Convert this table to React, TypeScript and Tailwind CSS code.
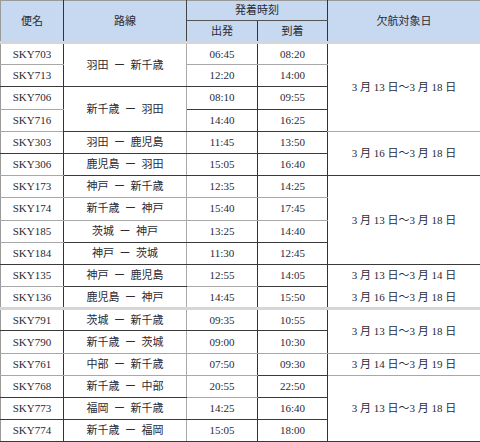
type Row = {
  flight: string;
  route?: string;
  routeSpan?: number;
  dep: string;
  arr: string;
  date?: string;
  dateSpan?: number;
  // bottom borders: flight, route, dep, arr, date
  b: [string, string, string, string, string];
};

const D = "border-b border-b-[#3a3a3a]";
const G = "border-b border-b-[#a8a8a8]";
const L = "border-b-[3px] border-b-[#d6d6d6]";
const N = "border-b border-b-white";

const rows: Row[] = [
  { flight: "SKY703", route: "羽田 ー 新千歳", routeSpan: 2, dep: "06:45", arr: "08:20", date: "3 月 13 日～3 月 18 日", dateSpan: 4, b: [G, D, G, G, G] },
  { flight: "SKY713", dep: "12:20", arr: "14:00", b: [D, D, D, D, G] },
  { flight: "SKY706", route: "新千歳 ー 羽田", routeSpan: 2, dep: "08:10", arr: "09:55", b: [G, D, D, D, G] },
  { flight: "SKY716", dep: "14:40", arr: "16:25", b: [G, D, D, D, G] },
  { flight: "SKY303", route: "羽田 ー 鹿児島", dep: "11:45", arr: "13:50", date: "3 月 16 日～3 月 18 日", dateSpan: 2, b: [D, D, D, D, G] },
  { flight: "SKY306", route: "鹿児島 ー 羽田", dep: "15:05", arr: "16:40", b: [G, D, D, D, D] },
  { flight: "SKY173", route: "神戸 ー 新千歳", dep: "12:35", arr: "14:25", date: "3 月 13 日～3 月 18 日", dateSpan: 4, b: [G, G, G, G, D] },
  { flight: "SKY174", route: "新千歳 ー 神戸", dep: "15:40", arr: "17:45", b: [G, G, G, G, D] },
  { flight: "SKY185", route: "茨城 ー 神戸", dep: "13:25", arr: "14:40", b: [G, D, D, D, D] },
  { flight: "SKY184", route: "神戸 ー 茨城", dep: "11:30", arr: "12:45", b: [D, D, D, D, D] },
  { flight: "SKY135", route: "神戸 ー 鹿児島", dep: "12:55", arr: "14:05", date: "3 月 13 日～3 月 14 日", dateSpan: 1, b: [G, D, G, D, N] },
  { flight: "SKY136", route: "鹿児島 ー 神戸", dep: "14:45", arr: "15:50", date: "3 月 16 日～3 月 18 日", dateSpan: 1, b: [L, L, L, L, L] },
  { flight: "SKY791", route: "茨城 ー 新千歳", dep: "09:35", arr: "10:55", date: "3 月 13 日～3 月 18 日", dateSpan: 2, b: [D, D, D, D, G] },
  { flight: "SKY790", route: "新千歳 ー 茨城", dep: "09:00", arr: "10:30", b: [G, G, G, G, G] },
  { flight: "SKY761", route: "中部 ー 新千歳", dep: "07:50", arr: "09:30", date: "3 月 14 日～3 月 19 日", dateSpan: 1, b: [G, G, G, D, G] },
  { flight: "SKY768", route: "新千歳 ー 中部", dep: "20:55", arr: "22:50", date: "3 月 13 日～3 月 18 日", dateSpan: 3, b: [D, D, G, D, D] },
  { flight: "SKY773", route: "福岡 ー 新千歳", dep: "14:25", arr: "16:40", b: [D, D, D, D, D] },
  { flight: "SKY774", route: "新千歳 ー 福岡", dep: "15:05", arr: "18:00", b: [D, D, D, D, D] },
];

// route cells that span: bottom border taken from the last row of the span
function routeBorder(i: number, span: number) {
  return rows[i + span - 1].b[1];
}
function dateBorder(i: number, span: number) {
  return rows[i + span - 1].b[4];
}

const font = { fontFamily: '"Liberation Serif", "Noto Sans CJK JP", serif' };

export default function App() {
  return (
    <div className="w-[480px] h-[442px] bg-white overflow-hidden" style={font}>
      <table className="border-collapse table-fixed w-[480px] text-[11px] text-[#2a2a35] text-center leading-none">
        <colgroup>
          <col className="w-[63px]" />
          <col className="w-[123px]" />
          <col className="w-[71px]" />
          <col className="w-[70px]" />
          <col className="w-[153px]" />
        </colgroup>
        <thead>
          <tr className="h-[20px]">
            <th rowSpan={2} className="font-normal bg-[#c6d9f0] border-t border-t-[#9a9a9a] border-l border-l-[#9a9a9a] border-r border-r-[#333] border-b-[3px] border-b-[#d6d6d6]">
              便名
            </th>
            <th rowSpan={2} className="font-normal bg-[#c6d9f0] border-t border-t-[#9a9a9a] border-r border-r-[#444] border-b-[3px] border-b-[#d6d6d6]">
              路線
            </th>
            <th colSpan={2} className="font-normal bg-[#c6d9f0] border-t border-t-[#9a9a9a] border-r border-r-[#333] border-b border-b-[#555]">
              発着時刻
            </th>
            <th rowSpan={2} className="font-normal bg-[#c6d9f0] border-t border-t-[#9a9a9a] border-r border-r-[#666] border-b-[3px] border-b-[#d6d6d6]">
              欠航対象日
            </th>
          </tr>
          <tr className="h-[22px]">
            <th className="font-normal bg-[#c6d9f0] border-r border-r-[#333] border-b-[3px] border-b-[#d6d6d6]">出発</th>
            <th className="font-normal bg-[#c6d9f0] border-r border-r-[#333] border-b-[3px] border-b-[#d6d6d6]">到着</th>
          </tr>
        </thead>
        <tbody>
          {rows.map((r, i) => (
            <tr key={r.flight} className="h-[22.2px]">
              <td className={`border-l border-l-[#9a9a9a] border-r border-r-[#333] ${r.b[0]}`}>{r.flight}</td>
              {r.route && (
                <td
                  rowSpan={r.routeSpan ?? 1}
                  className={`border-r border-r-[#aaa] whitespace-pre ${routeBorder(i, r.routeSpan ?? 1)}`}
                >
                  {r.route.replace(/ ー /, "  ー  ")}
                </td>
              )}
              <td className={`border-r border-r-[#333] ${r.b[2]}`}>{r.dep}</td>
              <td className={`border-r border-r-[#333] ${r.b[3]}`}>{r.arr}</td>
              {r.date && (
                <td
                  rowSpan={r.dateSpan ?? 1}
                  className={`border-r border-r-[#666] ${dateBorder(i, r.dateSpan ?? 1)}`}
                >
                  {r.date}
                </td>
              )}
            </tr>
          ))}
        </tbody>
      </table>
    </div>
  );
}
